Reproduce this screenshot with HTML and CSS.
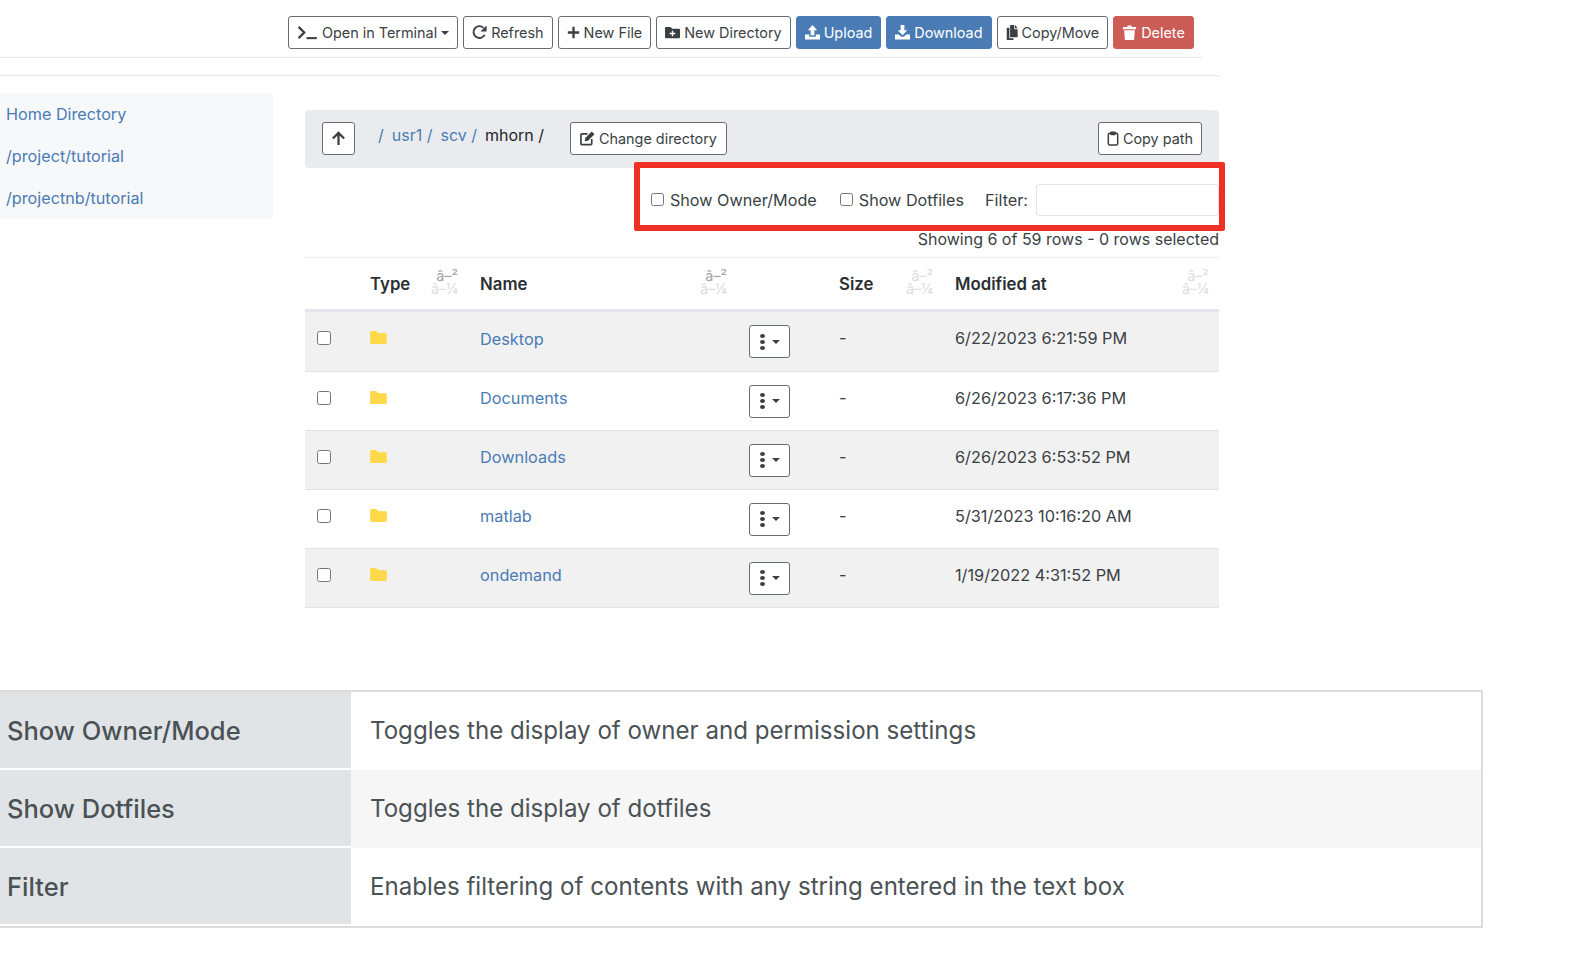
FILE: index.html
```html
<!DOCTYPE html>
<html lang="en">
<head>
    <meta charset="UTF-8">
    <title>Files</title>
    <link rel="stylesheet" href="styles.css">
</head>
<body>
    <div class="toolbar">
        <button class="btn"><svg class="ico ico-term" viewBox="0 0 22 16"><path d="M1.500 2l6 6-6 6" fill="none" stroke="currentColor" stroke-width="2.400"/><path d="M10 14h11" stroke="currentColor" stroke-width="2.200"/></svg>Open in Terminal<span class="caret"></span></button>
        <button class="btn"><svg class="ico" viewBox="0 0 16 16"><path d="M13.500 10.500A6.300 6.300 0 1 1 12.300 3" fill="none" stroke="currentColor" stroke-width="2"/><path d="M15.500 .5v6.500H9z" fill="currentColor"/></svg>Refresh</button>
        <button class="btn"><svg class="ico ico-plus" viewBox="0 0 16 16"><path d="M8 1v14M1 8h14" stroke="currentColor" stroke-width="2.800"/></svg>New File</button>
        <button class="btn"><svg class="ico" viewBox="0 0 16 16"><path d="M0 3A1 1 0 0 1 1 2h5l1.500 2H15a1 1 0 0 1 1 1v8a1 1 0 0 1-1 1H1a1 1 0 0 1-1-1z" fill="currentColor"/><path d="M8 6v6M5 9h6" stroke="#fff" stroke-width="1.500"/></svg>New Directory</button>
        <button class="btn btn-blue"><svg class="ico" viewBox="0 0 16 16"><path d="M8 0l5 5.500h-3V11H6V5.500H3z" fill="currentColor"/><path d="M0 10h4.500v2.500h7V10H16v5.500H0z" fill="currentColor"/></svg>Upload</button>
        <button class="btn btn-blue"><svg class="ico" viewBox="0 0 16 16"><path d="M6 0h4v5.500h3L8 11 3 5.500h3z" fill="currentColor"/><path d="M0 10h4l2.500 2.500h3L12 10h4v5.500H0z" fill="currentColor"/></svg>Download</button>
        <button class="btn"><svg class="ico ico-clip" viewBox="0 0 16 16" preserveAspectRatio="none"><path d="M5.500 0H11v4.500h4.500V13h-10z" fill="currentColor"/><path d="M12 0l3.500 3.500H12z" fill="currentColor"/><path d="M1 3h3.500v11H10v2H1z" fill="currentColor"/></svg>Copy/Move</button>
        <button class="btn btn-red"><svg class="ico" viewBox="0 0 16 16"><path d="M1 2h4.500l.6-1.500h3.800l.6 1.500H15v2.500H1z" fill="currentColor"/><path d="M2.300 5.500h11.400l-.8 10.500H3.100z" fill="currentColor"/></svg>Delete</button>
    </div>
    <div class="rule"></div>

    <div class="main">
        <ul class="favorites">
            <li><a href="#">Home Directory</a></li>
            <li><a href="#">/project/tutorial</a></li>
            <li><a href="#">/projectnb/tutorial</a></li>
        </ul>

        <div class="content">
            <div class="pathbar">
                <button class="btn btn-up"><svg class="ico" viewBox="0 0 16 16"><path d="M8 15V2M2 8l6-6 6 6" fill="none" stroke="currentColor" stroke-width="2.400"/></svg></button>
                <div class="crumbs">
                    <a href="#">/</a><a href="#">usr1 /</a><a href="#">scv /</a><span>mhorn /</span>
                </div>
                <button class="btn btn-change"><svg class="ico" viewBox="0 0 16 16"><path d="M12.500 8.500V13.500a1 1 0 0 1-1 1H2a1 1 0 0 1-1-1V4a1 1 0 0 1 1-1h6" fill="none" stroke="currentColor" stroke-width="1.800"/><path d="M5 11l.6-3.500L12.500 .5 15.500 3.500 8.500 10.500z" fill="currentColor"/></svg>Change directory</button>
                <button class="btn btn-copy"><svg class="ico ico-clip" viewBox="0 0 12 16"><rect x="1" y="2.500" width="10" height="12.500" rx="1.500" fill="none" stroke="currentColor" stroke-width="1.600"/><rect x="3" y=".5" width="6" height="4" rx="1" fill="currentColor"/></svg>Copy path</button>
            </div>

            <div class="filters">
                <label class="check"><input type="checkbox">Show Owner/Mode</label>
                <label class="check"><input type="checkbox">Show Dotfiles</label>
                <label class="filter">Filter:<input type="text"></label>
            </div>
            <div class="highlight"></div>
            <div class="info">Showing 6 of 59 rows - 0 rows selected</div>

            <table class="files">
                <colgroup>
                    <col class="c-check"><col class="c-type"><col class="c-name"><col class="c-size"><col class="c-mod">
                </colgroup>
                <thead>
                    <tr>
                        <th></th>
                        <th>Type<span class="sort">â–²<br><i>â–¼</i></span></th>
                        <th>Name<span class="sort sort-name">â–²<br><i>â–¼</i></span></th>
                        <th>Size<span class="sort faint">â–²<br><i>â–¼</i></span></th>
                        <th>Modified at<span class="sort faint">â–²<br><i>â–¼</i></span></th>
                    </tr>
                </thead>
                <tbody>
                    <tr class="odd first">
                        <td><input type="checkbox"></td>
                        <td><svg class="folder" viewBox="0 0 18 14"><path d="M0 1.500A1.500 1.500 0 0 1 1.500 0h5L9 2.500h7.500A1.500 1.500 0 0 1 18 4v8.500a1.500 1.500 0 0 1-1.500 1.500h-15A1.500 1.500 0 0 1 0 12.500z"/></svg></td>
                        <td class="namecol"><div class="namecell"><a href="#">Desktop</a><button class="btn btn-menu"><span class="dots"><b></b><b></b><b></b></span><span class="caret"></span></button></div></td>
                        <td>-</td>
                        <td>6/22/2023 6:21:59 PM</td>
                    </tr>
                    <tr>
                        <td><input type="checkbox"></td>
                        <td><svg class="folder" viewBox="0 0 18 14"><path d="M0 1.500A1.500 1.500 0 0 1 1.500 0h5L9 2.500h7.500A1.500 1.500 0 0 1 18 4v8.500a1.500 1.500 0 0 1-1.500 1.500h-15A1.500 1.500 0 0 1 0 12.500z"/></svg></td>
                        <td class="namecol"><div class="namecell"><a href="#">Documents</a><button class="btn btn-menu"><span class="dots"><b></b><b></b><b></b></span><span class="caret"></span></button></div></td>
                        <td>-</td>
                        <td>6/26/2023 6:17:36 PM</td>
                    </tr>
                    <tr class="odd">
                        <td><input type="checkbox"></td>
                        <td><svg class="folder" viewBox="0 0 18 14"><path d="M0 1.500A1.500 1.500 0 0 1 1.500 0h5L9 2.500h7.500A1.500 1.500 0 0 1 18 4v8.500a1.500 1.500 0 0 1-1.500 1.500h-15A1.500 1.500 0 0 1 0 12.500z"/></svg></td>
                        <td class="namecol"><div class="namecell"><a href="#">Downloads</a><button class="btn btn-menu"><span class="dots"><b></b><b></b><b></b></span><span class="caret"></span></button></div></td>
                        <td>-</td>
                        <td>6/26/2023 6:53:52 PM</td>
                    </tr>
                    <tr>
                        <td><input type="checkbox"></td>
                        <td><svg class="folder" viewBox="0 0 18 14"><path d="M0 1.500A1.500 1.500 0 0 1 1.500 0h5L9 2.500h7.500A1.500 1.500 0 0 1 18 4v8.500a1.500 1.500 0 0 1-1.500 1.500h-15A1.500 1.500 0 0 1 0 12.500z"/></svg></td>
                        <td class="namecol"><div class="namecell"><a href="#">matlab</a><button class="btn btn-menu"><span class="dots"><b></b><b></b><b></b></span><span class="caret"></span></button></div></td>
                        <td>-</td>
                        <td>5/31/2023 10:16:20 AM</td>
                    </tr>
                    <tr class="odd">
                        <td><input type="checkbox"></td>
                        <td><svg class="folder" viewBox="0 0 18 14"><path d="M0 1.500A1.500 1.500 0 0 1 1.500 0h5L9 2.500h7.500A1.500 1.500 0 0 1 18 4v8.500a1.500 1.500 0 0 1-1.500 1.500h-15A1.500 1.500 0 0 1 0 12.500z"/></svg></td>
                        <td class="namecol"><div class="namecell"><a href="#">ondemand</a><button class="btn btn-menu"><span class="dots"><b></b><b></b><b></b></span><span class="caret"></span></button></div></td>
                        <td>-</td>
                        <td>1/19/2022 4:31:52 PM</td>
                    </tr>
                </tbody>
            </table>
        </div>
    </div>

    <table class="docs">
        <tr>
            <th>Show Owner/Mode</th>
            <td>Toggles the display of owner and permission settings</td>
        </tr>
        <tr class="alt">
            <th>Show Dotfiles</th>
            <td>Toggles the display of dotfiles</td>
        </tr>
        <tr>
            <th>Filter</th>
            <td>Enables filtering of contents with any string entered in the text box</td>
        </tr>
    </table>
</body>
</html>
```

FILE: styles.css
```css
body { margin: 0; font-family: Inter, "Liberation Sans", sans-serif; font-size: 16.2px; color: #212529; background: #fff; }
a { color: #4a7bb5; text-decoration: none; }

.toolbar { display: flex; gap: 5px; width: 914px; padding: 16px 0 8px 288px; border-bottom: 1px solid #e6e6e6; }
.rule { width: 1219px; height: 17px; border-bottom: 1px solid #e6e6e6; }

.btn { display: inline-flex; align-items: center; justify-content: center; height: 33px; padding: 0 8px; gap: 4px; font-family: inherit; font-size: 14.4px; color: #3a3f44; background: #fff; border: 1.5px solid #666c72; border-radius: 3px; white-space: nowrap; }
.btn-blue { background: #4a7bb5; border-color: #4a7bb5; color: #fff; }
.btn-red { background: #cb5c56; border-color: #cb5c56; color: #fff; }
.btn-change { padding: 0 9px; }
.ico { width: 15px; height: 15px; flex: none; }
.ico-term { width: 21px; }
.ico-plus { width: 13px; height: 13px; }
.ico-clip { width: 12px; }
.caret { display: inline-block; border-top: 4px solid currentColor; border-left: 4px solid transparent; border-right: 4px solid transparent; }

.main { display: flex; gap: 32px; padding-top: 17px; }
.favorites { width: 273px; height: 126px; margin: 0; padding: 0; list-style: none; background: #f7f8fa; border-radius: 0 4px 4px 0; }
.favorites li { height: 42px; line-height: 42px; padding-left: 6px; }

.content { position: relative; width: 914px; }
.pathbar { display: flex; align-items: center; height: 58px; padding: 0 17px 2px; box-sizing: border-box; background: #e9ebef; border-radius: 4px; margin-top: 17px; }
.btn-up { width: 33px; padding: 0; }
.crumbs { display: flex; gap: 8px; width: 192px; margin-left: 23px; margin-top: -6px; font-size: 16px; }
.btn-copy { margin-left: auto; }

.filters { display: flex; align-items: center; justify-content: flex-end; height: 61px; padding-top: 2px; box-sizing: border-box; color: #3a3f44; }
.check { display: flex; align-items: center; margin-right: 23px; }
.check input { width: 13px; height: 13px; margin: 0 6px 0 0; }
.filter { display: flex; align-items: center; gap: 8px; margin-left: -2px; }
.filter input { width: 183px; height: 32px; box-sizing: border-box; border: 1px solid #e1e4e8; border-radius: 3px; }
.highlight { position: absolute; left: 329px; top: 69px; width: 591px; height: 69px; box-sizing: border-box; border: 6px solid #ee3124; border-radius: 2px; pointer-events: none; }
.info { text-align: right; height: 28px; font-size: 16px; color: #3a3f44; }

.files { width: 914px; table-layout: fixed; border-collapse: collapse; border-top: 1px solid #eceef0; font-size: 16.3px; color: #3a3f44; }
.c-check { width: 53px; }
.c-type { width: 110px; }
.c-name { width: 359px; }
.c-size { width: 116px; }
.files th { position: relative; height: 53px; padding: 0 12px; text-align: left; font-size: 16.8px; font-weight: 600; color: #2b2f33; border-bottom: 3px solid #e2e5e9; box-sizing: border-box; }
.files td { height: 59px; padding: 0 12px 7px; border-bottom: 1px solid #dfe2e6; box-sizing: border-box; }
.files tr.first td { height: 61px; padding-bottom: 8px; }
.files tr.odd td { background: #f1f1f2; }
.files td input { display: block; width: 14px; height: 14px; margin: 0; }
.files tr td.namecol { padding-bottom: 0; }
.folder { display: block; width: 17px; height: 13px; fill: #ffd94a; }
.namecell { display: flex; align-items: center; justify-content: space-between; padding-right: 25px; }
.namecell a { margin-top: -6px; }
.files tr.first td.namecol { padding-bottom: 0; }
.btn-menu { width: 41px; height: 33px; padding: 0; gap: 7px; }
.dots { display: flex; flex-direction: column; gap: 2px; }
.dots b { display: block; width: 5px; height: 4px; background: #3a3f44; border-radius: 50%; }
.sort { position: absolute; right: 10px; top: 11px; text-align: right; font-size: 14.5px; line-height: 13px; font-weight: 400; color: #a3a6a9; }
.sort i { font-style: normal; color: #dcdee0; }
.sort.faint { color: #dcdee0; }
.sort-name { right: 100px; }

.docs { width: 1483px; margin-top: 82px; table-layout: fixed; border-collapse: separate; border-spacing: 0; border-top: 2px solid #ddd; border-bottom: 2px solid #ddd; border-right: 2px solid #ddd; font-size: 24.1px; color: #4b5256; }
.docs th { width: 351px; height: 78px; padding: 0 0 0 7px; box-sizing: border-box; text-align: left; font-size: 25.5px; font-weight: 500; background: #e1e4e7; border-bottom: 2px solid #fff; }
.docs td { padding: 0 0 0 19px; border-bottom: 2px solid transparent; background-clip: padding-box; }
.docs tr.alt td { background: #f6f6f6; }
```
